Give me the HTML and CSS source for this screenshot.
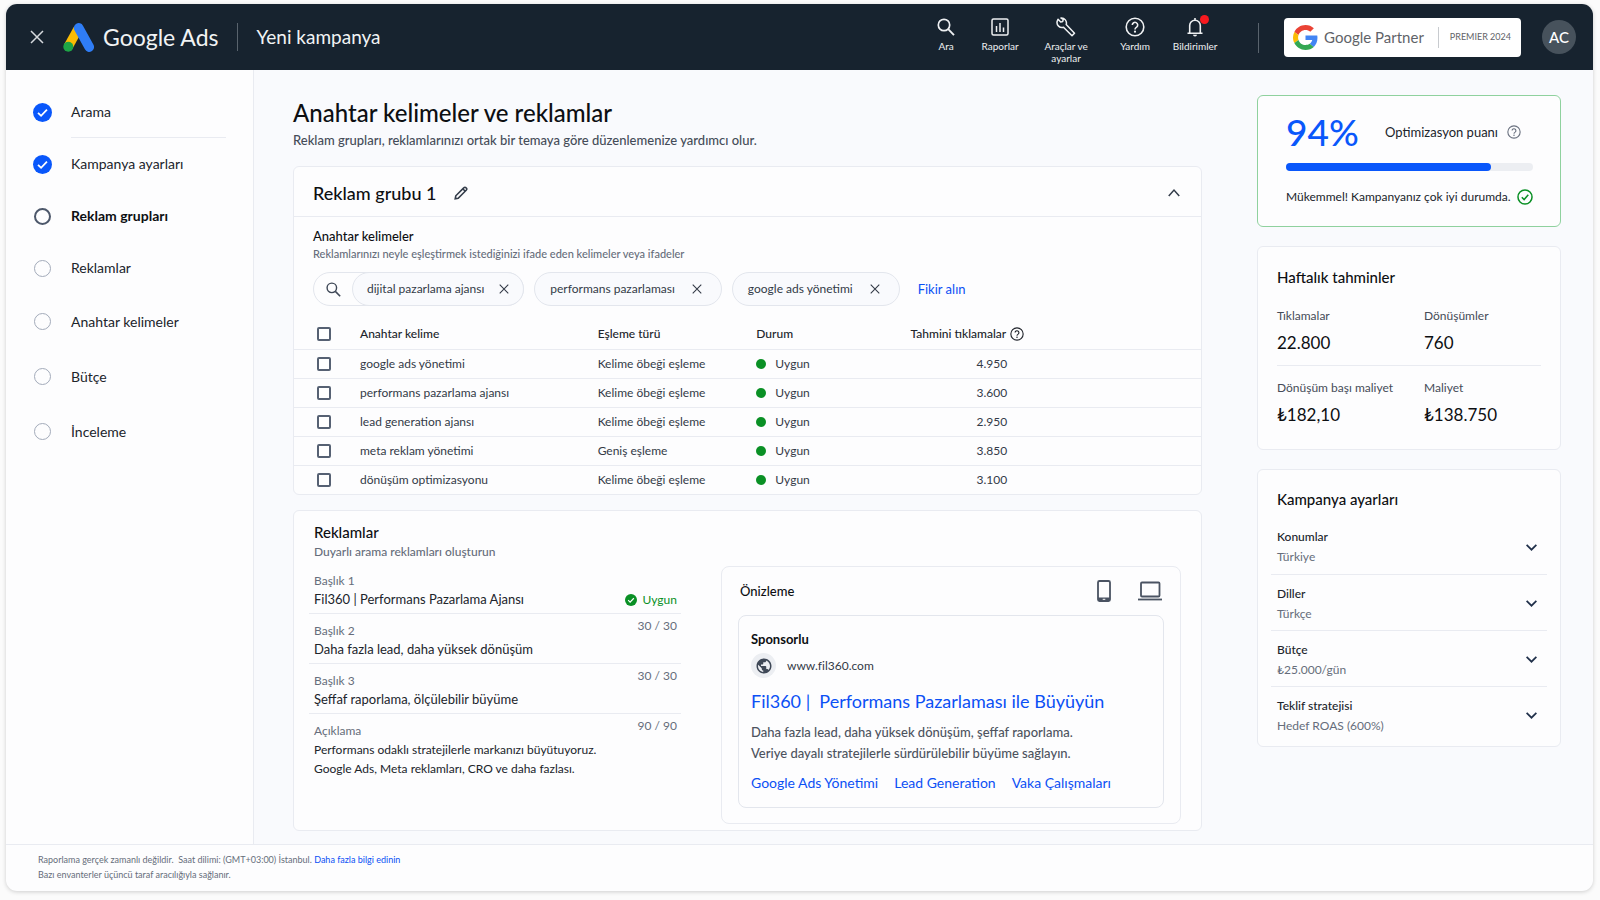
FILE: index.html
```html
<!DOCTYPE html>
<html lang="tr">
<head>
<meta charset="utf-8">
<meta name="viewport" content="width=device-width, initial-scale=1">
<title>Google Ads – Yeni kampanya</title>
<link rel="stylesheet" href="styles.css">
</head>
<body>
<svg class="sprite" aria-hidden="true">
  <symbol id="i-close" viewBox="0 0 14 14"><path d="M1 1l12 12M13 1L1 13" fill="none" stroke="currentColor" stroke-width="1.5"/></symbol>
  <symbol id="i-search" viewBox="0 0 18 18"><circle cx="7" cy="7" r="5.7" fill="none" stroke="currentColor" stroke-width="1.7"/><path d="M11.2 11.2l5.8 5.9" fill="none" stroke="currentColor" stroke-width="1.9"/></symbol>
  <symbol id="i-down" viewBox="0 0 12 12"><path d="M1.5 3.5L6 8l4.500-4.500" fill="none" stroke="currentColor" stroke-width="1.6"/></symbol>
  <symbol id="i-help" viewBox="0 0 20 20"><circle cx="10" cy="10" r="8.800" fill="none" stroke="currentColor" stroke-width="1.600"/><path d="M7.300 8a2.700 2.700 0 1 1 4.300 2.200c-1 .7-1.600 1.200-1.600 2.300" fill="none" stroke="currentColor" stroke-width="1.600"/><circle cx="10" cy="14.700" r="1.100" fill="currentColor"/></symbol>
  <symbol id="i-done" viewBox="0 0 20 20"><circle cx="10" cy="10" r="10" fill="currentColor"/><path d="M5.300 10.300l3.200 3.200 6.200-6.400" fill="none" stroke="#fff" stroke-width="1.900"/></symbol>
</svg>
<div class="app">
  <header class="topbar">
    <button class="plain close" type="button" aria-label="Kapat"><svg width="14" height="14"><use href="#i-close"/></svg></button>
    <div class="brand">
      <svg width="31" height="29" viewBox="0 0 31 29" aria-hidden="true">
        <path d="M15 6L5.300 23.600" stroke="#fbbc04" stroke-width="9.400"/>
        <path d="M15.700 5l10.500 19" stroke="#2f7df6" stroke-width="9.800" stroke-linecap="round"/>
        <circle cx="5.300" cy="23.800" r="5" fill="#1ea446"/>
      </svg>
      <span class="brand-name">Google Ads</span>
    </div>
    <div class="page-name">Yeni kampanya</div>
    <nav class="tools" aria-label="Araçlar">
      <button class="plain tool tool-s" type="button"><svg width="18" height="18"><use href="#i-search"/></svg><span>Ara</span></button>
      <button class="plain tool tool-s" type="button"><svg width="18" height="18" viewBox="0 0 18 18"><rect x="1" y="1" width="16" height="16" rx="1.500" fill="none" stroke="currentColor" stroke-width="1.500"/><path d="M5.500 8v6M9 5v9M12.500 9.500V14" stroke="currentColor" stroke-width="1.500"/></svg><span>Raporlar</span></button>
      <button class="plain tool tool-l" type="button"><svg width="20" height="20" viewBox="0 0 20 20"><path d="M2 2.300l2.700 2.800 2-.6.600-2.100L5 1a5 5 0 0 1 5.200 6.500l8.300 8.700-2.500 2.600-8.500-8.500A5 5 0 0 1 1.200 4.200z" fill="none" stroke="currentColor" stroke-width="1.500" stroke-linejoin="round"/></svg><span>Araçlar ve ayarlar</span></button>
      <button class="plain tool tool-m" type="button"><svg width="20" height="20"><use href="#i-help"/></svg><span>Yardım</span></button>
      <button class="plain tool tool-m" type="button"><svg width="18" height="20" viewBox="0 0 18 20"><path d="M1.500 16.200h15M3.700 16V8.500a5.300 5.300 0 0 1 10.600 0V16M9 3V1" fill="none" stroke="currentColor" stroke-width="1.600"/><path d="M7 17.800h4a2 1.700 0 0 1-4 0z" fill="currentColor"/></svg><i class="alert"></i><span>Bildirimler</span></button>
    </nav>
    <div class="partner">
      <svg width="25" height="25" viewBox="0 0 48 48" aria-hidden="true">
        <path fill="#ea4335" d="M24 9.500c3.540 0 6.710 1.220 9.210 3.600l6.850-6.850C35.900 2.380 30.470 0 24 0 14.620 0 6.510 5.380 2.560 13.220l7.980 6.190C12.430 13.720 17.740 9.500 24 9.500z"/>
        <path fill="#4285f4" d="M46.980 24.550c0-1.570-.15-3.090-.38-4.550H24v9.020h12.940c-.58 2.960-2.260 5.480-4.780 7.180l7.730 6c4.510-4.180 7.090-10.360 7.090-17.650z"/>
        <path fill="#fbbc05" d="M10.530 28.590c-.48-1.450-.76-2.990-.76-4.590s.27-3.140.76-4.590l-7.980-6.190C.92 16.460 0 20.120 0 24c0 3.880.92 7.540 2.560 10.780l7.970-6.190z"/>
        <path fill="#34a853" d="M24 48c6.480 0 11.930-2.130 15.890-5.810l-7.730-6c-2.150 1.450-4.920 2.300-8.160 2.300-6.260 0-11.570-4.220-13.470-9.910l-7.980 6.190C6.510 42.620 14.620 48 24 48z"/>
      </svg>
      <span class="partner-name">Google Partner</span>
      <span class="partner-tier">PREMIER 2024</span>
    </div>
    <button class="avatar" type="button">AC</button>
  </header>

  <div class="body">
    <nav class="steps" aria-label="Kampanya adımları">
      <a class="step ruled" href="#"><svg class="done" width="19" height="19"><use href="#i-done"/></svg><span>Arama</span></a>
      <a class="step" href="#"><svg class="done" width="19" height="19"><use href="#i-done"/></svg><span>Kampanya ayarları</span></a>
      <a class="step current" href="#" aria-current="step"><i class="ring"></i><span>Reklam grupları</span></a>
      <a class="step" href="#"><i class="ring"></i><span>Reklamlar</span></a>
      <a class="step tall" href="#"><i class="ring"></i><span>Anahtar kelimeler</span></a>
      <a class="step tall" href="#"><i class="ring"></i><span>Bütçe</span></a>
      <a class="step tall" href="#"><i class="ring"></i><span>İnceleme</span></a>
    </nav>

    <main class="content">
      <h1>Anahtar kelimeler ve reklamlar</h1>
      <p class="lead">Reklam grupları, reklamlarınızı ortak bir temaya göre düzenlemenize yardımcı olur.</p>

      <section class="card group">
        <div class="group-head">
          <h2>Reklam grubu 1</h2>
          <button class="plain" type="button" aria-label="Düzenle"><svg width="14" height="14" viewBox="0 0 14 14"><path d="M1.200 12.800l.6-3L10 1.600a1.300 1.300 0 0 1 1.900 0l.5.5a1.300 1.300 0 0 1 0 1.900l-8.200 8.200zM8.800 2.800l2.400 2.400" fill="none" stroke="currentColor" stroke-width="1.600"/></svg></button>
          <button class="plain collapse" type="button" aria-label="Daralt"><svg width="14" height="14" viewBox="0 0 12 12"><path d="M1.500 8.500L6 3.500l4.500 5" fill="none" stroke="currentColor" stroke-width="1.300"/></svg></button>
        </div>
        <div class="keywords">
          <h3>Anahtar kelimeler</h3>
          <p class="hint small">Reklamlarınızı neyle eşleştirmek istediğinizi ifade eden kelimeler veya ifadeler</p>
          <div class="chips">
            <div class="finder">
              <button class="plain find" type="button" aria-label="Kelime ara"><svg width="15" height="15"><use href="#i-search"/></svg></button>
              <span class="chip">dijital pazarlama ajansı<button class="plain" type="button" aria-label="Kaldır"><svg width="10" height="10"><use href="#i-close"/></svg></button></span>
            </div>
            <span class="chip wide">performans pazarlaması<button class="plain" type="button" aria-label="Kaldır"><svg width="10" height="10"><use href="#i-close"/></svg></button></span>
            <span class="chip wide">google ads yönetimi<button class="plain" type="button" aria-label="Kaldır"><svg width="10" height="10"><use href="#i-close"/></svg></button></span>
            <a class="ideas" href="#">Fikir alın</a>
          </div>
        </div>
        <table class="terms">
          <colgroup><col class="c-check"><col class="c-term"><col class="c-match"><col class="c-state"><col></colgroup>
          <thead>
            <tr><th><input type="checkbox" aria-label="Tümünü seç"></th><th>Anahtar kelime</th><th>Eşleme türü</th><th>Durum</th><th><span class="th-help">Tahmini tıklamalar<svg width="14" height="14"><use href="#i-help"/></svg></span></th></tr>
          </thead>
          <tbody>
            <tr><td><input type="checkbox" aria-label="google ads yönetimi"></td><td>google ads yönetimi</td><td>Kelime öbeği eşleme</td><td><span class="state">Uygun</span></td><td class="num">4.950</td></tr>
            <tr><td><input type="checkbox" aria-label="performans pazarlama ajansı"></td><td>performans pazarlama ajansı</td><td>Kelime öbeği eşleme</td><td><span class="state">Uygun</span></td><td class="num">3.600</td></tr>
            <tr><td><input type="checkbox" aria-label="lead generation ajansı"></td><td>lead generation ajansı</td><td>Kelime öbeği eşleme</td><td><span class="state">Uygun</span></td><td class="num">2.950</td></tr>
            <tr><td><input type="checkbox" aria-label="meta reklam yönetimi"></td><td>meta reklam yönetimi</td><td>Geniş eşleme</td><td><span class="state">Uygun</span></td><td class="num">3.850</td></tr>
            <tr><td><input type="checkbox" aria-label="dönüşüm optimizasyonu"></td><td>dönüşüm optimizasyonu</td><td>Kelime öbeği eşleme</td><td><span class="state">Uygun</span></td><td class="num">3.100</td></tr>
          </tbody>
        </table>
      </section>

      <section class="card ads">
        <div class="assets">
          <h2>Reklamlar</h2>
          <p class="hint">Duyarlı arama reklamları oluşturun</p>
          <div class="asset first">
            <div><div class="label">Başlık 1</div><div class="value">Fil360 | Performans Pazarlama Ajansı</div></div>
            <span class="ok"><svg width="12" height="12"><use href="#i-done"/></svg>Uygun</span>
          </div>
          <div class="asset"><div><div class="label">Başlık 2</div><div class="value">Daha fazla lead, daha yüksek dönüşüm</div></div><span class="count">30 / 30</span></div>
          <div class="asset"><div><div class="label">Başlık 3</div><div class="value">Şeffaf raporlama, ölçülebilir büyüme</div></div><span class="count">30 / 30</span></div>
          <div class="asset"><div><div class="label">Açıklama</div><div class="value long">Performans odaklı stratejilerle markanızı büyütuyoruz.<br>Google Ads, Meta reklamları, CRO ve daha fazlası.</div></div><span class="count">90 / 90</span></div>
        </div>
        <div class="preview">
          <div class="preview-head">
            <h3>Önizleme</h3>
            <button class="plain" type="button" aria-label="Mobil"><svg width="16" height="24" viewBox="0 0 16 24"><rect x="2" y="2" width="12" height="20" rx="1.500" fill="none" stroke="currentColor" stroke-width="1.800"/><path d="M2 18.500h12V21a1 1 0 0 1-1 1H3a1 1 0 0 1-1-1z" fill="currentColor"/><path d="M6.700 20.300h2.600" stroke="#fff"/></svg></button>
            <button class="plain" type="button" aria-label="Masaüstü"><svg width="24" height="20" viewBox="0 0 24 20"><rect x="3" y="1.500" width="18.500" height="14" rx="1" fill="none" stroke="currentColor" stroke-width="1.800"/><path d="M0 18.500h24" stroke="currentColor" stroke-width="1.800"/></svg></button>
          </div>
          <article class="ad">
            <div class="sponsor">Sponsorlu</div>
            <div class="site"><span class="globe"><svg width="18" height="18" viewBox="0 0 24 24"><path fill="currentColor" d="M12 2C6.480 2 2 6.480 2 12s4.480 10 10 10 10-4.480 10-10S17.520 2 12 2zm-1 17.930c-3.950-.49-7-3.850-7-7.930 0-.62.080-1.210.21-1.790L9 15v1c0 1.100.9 2 2 2v1.930zm6.900-2.540c-.26-.81-1-1.390-1.900-1.390h-1v-3c0-.55-.45-1-1-1H8v-2h2c.55 0 1-.45 1-1V7h2c1.100 0 2-.9 2-2v-.41c2.930 1.190 5 4.060 5 7.410 0 2.080-.8 3.970-2.100 5.390z"/></svg></span>www.fil360.com</div>
            <a class="ad-title" href="#">Fil360 | &nbsp;Performans Pazarlaması ile Büyüyün</a>
            <p class="ad-text">Daha fazla lead, daha yüksek dönüşüm, şeffaf raporlama.<br>Veriye dayalı stratejilerle sürdürülebilir büyüme sağlayın.</p>
            <div class="ad-links"><a href="#">Google Ads Yönetimi</a><a href="#">Lead Generation</a><a href="#">Vaka Çalışmaları</a></div>
          </article>
        </div>
      </section>
    </main>

    <aside class="rail">
      <section class="card score">
        <div class="score-top"><strong>94%</strong><span>Optimizasyon puanı</span><svg width="14" height="14"><use href="#i-help"/></svg></div>
        <div class="bar" role="progressbar" aria-valuenow="94" aria-label="Optimizasyon puanı"><div class="fill" style="width:83%"></div></div>
        <div class="score-note"><span>Mükemmel! Kampanyanız çok iyi durumda.</span><svg width="16" height="16" viewBox="0 0 20 20"><circle cx="10" cy="10" r="8.800" fill="none" stroke="currentColor" stroke-width="1.900"/><path d="M6 10.300l2.900 2.900 5.200-5.900" fill="none" stroke="currentColor" stroke-width="1.900"/></svg></div>
      </section>
      <section class="card weekly">
        <h2>Haftalık tahminler</h2>
        <div class="stats"><div><div class="stat-label">Tıklamalar</div><div class="stat">22.800</div></div><div><div class="stat-label">Dönüşümler</div><div class="stat">760</div></div></div>
        <div class="stats"><div><div class="stat-label">Dönüşüm başı maliyet</div><div class="stat">₺182,10</div></div><div><div class="stat-label">Maliyet</div><div class="stat">₺138.750</div></div></div>
      </section>
      <section class="card settings">
        <h2>Kampanya ayarları</h2>
        <button class="plain setting" type="button"><span><b>Konumlar</b><em>Türkiye</em></span><svg width="13" height="13"><use href="#i-down"/></svg></button>
        <button class="plain setting" type="button"><span><b>Diller</b><em>Türkçe</em></span><svg width="13" height="13"><use href="#i-down"/></svg></button>
        <button class="plain setting" type="button"><span><b>Bütçe</b><em>₺25.000/gün</em></span><svg width="13" height="13"><use href="#i-down"/></svg></button>
        <button class="plain setting" type="button"><span><b>Teklif stratejisi</b><em>Hedef ROAS (600%)</em></span><svg width="13" height="13"><use href="#i-down"/></svg></button>
      </section>
    </aside>
  </div>

  <footer class="foot">
    <p>Raporlama gerçek zamanlı değildir. &nbsp;Saat dilimi: (GMT+03:00) İstanbul. <a href="#">Daha fazla bilgi edinin</a></p>
    <p>Bazı envanterler üçüncü taraf aracılığıyla sağlanır.</p>
  </footer>
</div>
</body>
</html>
```
FILE: styles.css
```css
*, *::before, *::after { box-sizing: border-box; }
body {
  margin: 0;
  padding: 4px 7px 9px 6px;
  background: #fbfbfb;
  color: #20242b;
  font: 13px/18px Lato, "Open Sans", sans-serif;
}
h1, h2, h3, p { margin: 0; font-weight: 500; color: #0d0f12; }
a { color: #0b50f5; text-decoration: none; }
svg { display: block; flex: none; }
.sprite { position: absolute; width: 0; height: 0; }
.plain { border: 0; background: none; padding: 0; margin: 0; font: inherit; color: inherit; cursor: pointer; }

.app {
  display: flex;
  flex-direction: column;
  min-height: calc(100vh - 13px);
  border-radius: 11px;
  overflow: hidden;
  background: #fdfdfe;
  box-shadow: 0 1px 4px rgba(0, 0, 0, .18);
}

/* Top bar */
.topbar { display: flex; align-items: center; height: 66px; padding: 0 17px 0 24px; background: #17232f; color: #fff; }
.close { color: #d5d9dd; margin-right: 19px; }
.brand { display: flex; align-items: center; gap: 9px; padding-right: 18px; border-right: 1px solid #59636d; height: 28px; }
.brand-name { font-size: 23px; line-height: 28px; color: #f1f3f4; }
.page-name { padding-left: 19px; font-size: 19px; line-height: 28px; color: #f1f3f4; }
.tools { display: flex; align-self: stretch; margin-left: auto; padding-top: 13px; }
.tool { position: relative; display: flex; flex-direction: column; align-items: center; font-size: 10px; line-height: 12px; color: #eef0f2; gap: 3px; }
.tool svg { height: 20px; }
.tool span { max-width: 56px; }
.tool-s { width: 54px; }
.tool-l { width: 78px; }
.tool-m { width: 60px; }
.alert { position: absolute; top: -2px; right: 16px; width: 9px; height: 9px; border-radius: 50%; background: #f8191f; }
.partner { display: flex; align-items: center; height: 39px; margin-left: 59px; padding: 0 10px 0 9px; border-radius: 4px; background: #fff; color: #5f6368; position: relative; }
.partner::before { content: ""; position: absolute; left: -26px; top: 5px; width: 1px; height: 30px; background: #59636d; }
.partner-name { margin-left: 6px; padding-right: 14px; border-right: 1px solid #c8cbcf; font-size: 15px; line-height: 21px; }
.partner-tier { margin-left: 11px; font-size: 9px; }
.avatar { width: 34px; height: 34px; margin-left: 21px; padding: 0; border: 0; border-radius: 50%; background: #47525c; color: #fff; font: 500 15px/34px Lato, sans-serif; }

/* Body columns */
.body { display: flex; flex: 1; background: #f9fafd; }
.steps { width: 248px; padding: 16px 27px 0 27px; background: #fdfdfe; border-right: 1px solid #e9ebf1; flex: none; }
.step { display: flex; align-items: center; height: 52px; gap: 19px; font-size: 14px; color: #20242b; }
.step.tall { height: 55px; }
.step span { flex: 1; line-height: 50px; }
.ruled span { border-bottom: 1px solid #e9ebf1; }
.done { color: #0957fb; }
.ring { width: 17px; height: 17px; margin: 0 1px; border: 1px solid #a3abba; border-radius: 50%; }
.current { font-weight: 700; color: #0d0f12; }
.current .ring { border: 2px solid #4d586b; }

.content { flex: 1; padding: 26px 0 13px 39px; min-width: 0; }
h1 { font-size: 24px; line-height: 34px; }
.lead { margin-top: 1px; color: #454c58; }
.card { background: #fdfdfe; border: 1px solid #e9ebf1; border-radius: 6px; }

.group { margin-top: 17px; }
.group-head { display: flex; align-items: center; height: 50px; padding: 2px 20px 0 19px; border-bottom: 1px solid #e9ebf1; gap: 18px; color: #333c4a; }
.group-head h2 { font-size: 18px; line-height: 24px; }
.collapse { margin-left: auto; }
.keywords { padding: 10px 18px 0 19px; }
.keywords h3 { font-size: 13px; line-height: 18px; }
.hint { font-size: 12px; line-height: 18px; color: #666d7b; }
.hint.small { font-size: 11px; }
.chips { display: flex; align-items: center; gap: 10px; margin-top: 9px; }
.finder { display: flex; border: 1px solid #e3e6ed; border-radius: 17px; }
.find { width: 39px; display: grid; place-items: center; color: #3f4857; }
.finder .chip { margin: -1px; }
.chip { display: flex; align-items: center; gap: 15px; height: 34px; padding: 0 14px; border: 1px solid #e3e6ed; border-radius: 17px; background: #f9fafd; font-size: 12px; color: #333a47; }
.chip.wide { padding: 0 19px 0 15px; gap: 17px; }
.ideas { margin-left: 8px; }

.terms { width: 100%; margin-top: 13px; border-collapse: collapse; table-layout: fixed; font-size: 12px; line-height: 16px; color: #333a47; }
.c-check { width: 66px; }
.c-term { width: 26.2%; }
.c-match { width: 17.5%; }
.c-state { width: 17%; }
.terms th, .terms td { padding: 0; text-align: left; font-weight: 400; height: 29px; border-top: 1px solid #e9ebf1; }
.terms th { height: 30px; border-top: 0; font-weight: 500; color: #20242b; }
.terms th:first-child, .terms td:first-child { padding-left: 23px; }
.terms input { appearance: none; display: block; width: 14px; height: 14px; margin: 0; border: 2px solid #566173; border-radius: 2px; background: #fff; }
.th-help { display: flex; align-items: center; gap: 4px; color: inherit; }
.terms .num { padding-left: 66px; }
.state { display: flex; align-items: center; gap: 9px; }
.state::before { content: ""; width: 10px; height: 10px; border-radius: 50%; background: #0a9025; }

/* Ads */
.ads { display: flex; gap: 40px; margin-top: 15px; padding: 0 20px 6px 15px; min-height: 321px; }
.assets { flex: 1; padding-top: 10px; min-width: 0; }
.assets h2 { font-size: 15px; line-height: 22px; padding-left: 5px; }
.assets .hint { padding-left: 5px; }
.asset { display: flex; justify-content: space-between; padding: 7px 4px 4px 5px; border-top: 1px solid #e9ebf1; }
.asset.first { border-top: 0; padding-top: 10px; align-items: flex-end; }
.label { font-size: 12px; line-height: 19px; color: #666d7b; }
.value { line-height: 19px; }
.value.long { font-size: 12px; }
.count { font-size: 12px; line-height: 16px; margin-top: -3px; color: #666d7b; }
.ok { display: flex; align-items: center; gap: 6px; font-size: 12px; color: #0a9025; line-height: 19px; }
.preview { flex: 0 1 460px; align-self: flex-start; margin-top: 55px; padding: 0 16px 15px; border: 1px solid #e9ebf1; border-radius: 8px; min-width: 0; }
.preview-head { display: flex; align-items: center; height: 48px; padding: 0 2px; gap: 26px; color: #4a5362; }
.preview-head h3 { flex: 1; font-size: 13px; }
.ad { padding: 14px 12px; border: 1px solid #e3e6ed; border-radius: 8px; }
.sponsor { font-weight: 700; color: #0d0f12; }
.site { display: flex; align-items: center; gap: 11px; margin-top: 5px; font-size: 12px; color: #333a47; }
.globe { display: grid; place-items: center; width: 25px; height: 25px; border-radius: 50%; background: #eceef2; color: #3f4857; }
.ad-title { display: block; margin-top: 10px; font-size: 18px; line-height: 26px; }
.ad-text { margin-top: 8px; font-size: 13px; line-height: 21px; color: #4d535e; }
.ad-links { display: flex; gap: 16px; margin-top: 9px; font-size: 14px; line-height: 20px; }

/* Right rail */
.rail { width: 391px; flex: none; padding: 25px 32px 0 55px; display: flex; flex-direction: column; gap: 19px; }
.score { height: 132px; padding: 17px 27px 0 28px; border-color: #8fd19e; }
.score-top { display: flex; align-items: center; line-height: 38px; }
.score-top strong { font-size: 37px; font-weight: 500; color: #0957fb; margin-right: auto; }
.score-top svg { margin: 0 12px 0 9px; color: #6b7280; }
.bar { height: 8px; margin-top: 12px; border-radius: 4px; background: #eceef2; }
.fill { height: 8px; border-radius: 4px; background: #0957fb; }
.score-note { display: flex; align-items: center; justify-content: space-between; margin-top: 17px; font-size: 12px; color: #0a9025; }
.score-note span { color: #20242b; }
.rail h2 { font-size: 15px; line-height: 22px; }
.weekly { padding: 19px 19px 20px; }
.stats { display: grid; grid-template-columns: 147px 1fr; padding-bottom: 9px; }
.weekly h2 + .stats { margin-top: 19px; border-bottom: 1px solid #e9ebf1; }
.stats + .stats { padding: 13px 0 0; }
.stat-label { font-size: 12px; line-height: 18px; color: #454c58; }
.stat { margin-top: 4px; font-size: 17px; line-height: 28px; color: #0d0f12; }
.weekly h2 + .stats { padding-bottom: 8px; }
.settings { padding: 18px 13px 4px; }
.settings h2 { padding-left: 6px; margin-bottom: 8px; }
.setting { display: flex; align-items: center; justify-content: space-between; width: 100%; height: 56px; padding: 2px 9px 0 6px; text-align: left; color: #20304a; }
.setting + .setting { border-top: 1px solid #e9ebf1; }
.setting b { display: block; font-weight: 500; font-size: 12px; line-height: 20px; color: #20242b; }
.setting em { display: block; font-style: normal; font-size: 12px; line-height: 20px; color: #666d7b; }

.foot { height: 47px; padding: 7px 32px 0; border-top: 1px solid #e9ebf1; font-size: 9px; line-height: 15px; }
.foot p { color: #666d7b; font-weight: 400; }
```
